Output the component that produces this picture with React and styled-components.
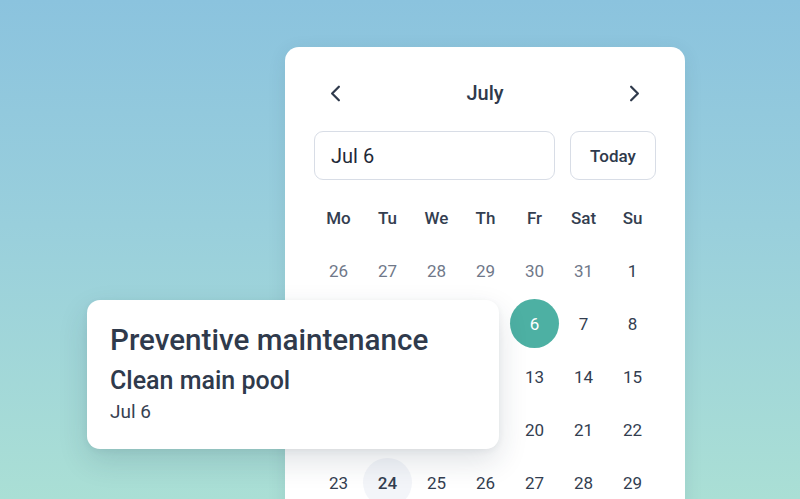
import React from "react";
import styled, { createGlobalStyle } from "styled-components";
import { ChevronLeft, ChevronRight } from "lucide-react";

const Global = createGlobalStyle`
  html, body { margin: 0; padding: 0; }
  body {
    width: 800px; height: 499px; overflow: hidden;
    font-family: Roboto, "Noto Sans", sans-serif;
    background: linear-gradient(180deg, #8bc3de 0%, #99cfdc 45%, #aadfd5 100%);
  }
`;

const Stage = styled.div`
  position: relative;
  width: 800px;
  height: 499px;
  overflow: hidden;
  box-sizing: border-box;
  padding: 47px 0 0 285px;
`;

const CalendarCard = styled.div`
  width: 400px;
  height: 520px;
  box-sizing: border-box;
  background: #fff;
  border-radius: 14px;
  padding: 22px 29px 0;
  box-shadow: 0 4px 18px rgba(40, 70, 90, 0.10);
`;

const Header = styled.div`
  height: 48px;
  display: flex;
  align-items: center;
  justify-content: space-between;
  padding: 0 8px;
  color: #2f3a4c;
`;

const Month = styled.div`
  font-size: 20px;
  font-weight: 500;
  color: #2f3a4c;
`;

const NavBtn = styled.button`
  border: none;
  background: none;
  padding: 0;
  display: flex;
  color: #2f3a4c;
`;

const InputRow = styled.div`
  margin-top: 14px;
  display: flex;
  gap: 15px;
`;

const DateInput = styled.div`
  flex: 1;
  height: 49px;
  box-sizing: border-box;
  border: 1.5px solid #d8dde6;
  border-radius: 9px;
  display: flex;
  align-items: center;
  padding-left: 16px;
  font-size: 20px;
  color: #1f2937;
`;

const TodayBtn = styled.button`
  width: 86px;
  height: 49px;
  box-sizing: border-box;
  border: 1.5px solid #d8dde6;
  border-radius: 9px;
  background: #fff;
  font-family: inherit;
  font-size: 17px;
  font-weight: 500;
  color: #2f3a4c;
`;

const Grid = styled.div`
  margin-top: 11px;
  display: grid;
  grid-template-columns: repeat(7, 1fr);
  grid-auto-rows: 53px;
`;

const Cell = styled.div`
  display: flex;
  align-items: center;
  justify-content: center;
`;

const Day = styled.div`
  width: 49px;
  height: 49px;
  border-radius: 50%;
  display: flex;
  align-items: center;
  justify-content: center;
  font-size: 17px;
  font-weight: ${(p) => (p.$head || p.$today ? 500 : 400)};
  color: ${(p) =>
    p.$selected ? "#fff" : p.$muted ? "#6f7889" : "#333e50"};
  background: ${(p) =>
    p.$selected ? "#4db0a3" : p.$today ? "#f3f5f9" : "transparent"};
`;

const EventCard = styled.div`
  position: absolute;
  left: 87px;
  top: 300px;
  width: 412px;
  height: 149px;
  box-sizing: border-box;
  background: #fff;
  border-radius: 13px;
  padding: 22px 23px;
  box-shadow: 0 12px 30px rgba(30, 50, 70, 0.14), 0 2px 6px rgba(30, 50, 70, 0.06);
  display: flex;
  flex-direction: column;
`;

const Title = styled.div`
  font-size: 29.6px;
  font-weight: 500;
  color: #2f3a4c;
  line-height: 36px;
`;

const Subtitle = styled.div`
  margin-top: 8px;
  font-size: 25px;
  font-weight: 500;
  color: #2f3a4c;
  line-height: 30px;
`;

const DateText = styled.div`
  margin-top: 4px;
  font-size: 19px;
  color: #374151;
  line-height: 24px;
`;

const heads = ["Mo", "Tu", "We", "Th", "Fr", "Sat", "Su"];
const days = [
  [26, 27, 28, 29, 30, 31, 1],
  [2, 3, 4, 5, 6, 7, 8],
  [9, 10, 11, 12, 13, 14, 15],
  [16, 17, 18, 19, 20, 21, 22],
  [23, 24, 25, 26, 27, 28, 29],
];

export default function App() {
  return (
    <>
      <Global />
      <Stage>
        <CalendarCard>
          <Header>
            <NavBtn><ChevronLeft size={27} strokeWidth={2} /></NavBtn>
            <Month>July</Month>
            <NavBtn><ChevronRight size={27} strokeWidth={2} /></NavBtn>
          </Header>
          <InputRow>
            <DateInput>Jul 6</DateInput>
            <TodayBtn>Today</TodayBtn>
          </InputRow>
          <Grid>
            {heads.map((h) => (
              <Cell key={h}><Day $head>{h}</Day></Cell>
            ))}
            {days.map((row, r) =>
              row.map((d, c) => (
                <Cell key={`${r}-${c}`}>
                  <Day
                    $muted={r === 0 && c < 6}
                    $selected={r === 1 && d === 6}
                    $today={r === 4 && d === 24}
                  >
                    {d}
                  </Day>
                </Cell>
              ))
            )}
          </Grid>
        </CalendarCard>
        <EventCard>
          <Title>Preventive maintenance</Title>
          <Subtitle>Clean main pool</Subtitle>
          <DateText>Jul 6</DateText>
        </EventCard>
      </Stage>
    </>
  );
}
